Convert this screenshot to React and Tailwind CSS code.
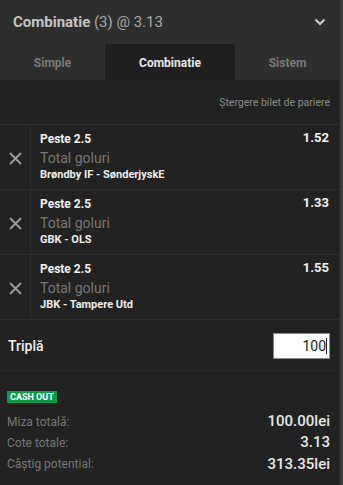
import React from "react";

function Row({ title, odd, market, match }) {
  return (
    <div className="flex h-[65px] border-b border-[#2e2e2e]">
      <div className="w-[31px] shrink-0 border-r border-[#2e2e2e] flex items-center justify-center">
        <svg width="13" height="13" viewBox="0 0 13 13" className="mt-[2px]">
          <path d="M1 1 L12 12 M12 1 L1 12" stroke="#9a9a9a" strokeWidth="2" />
        </svg>
      </div>
      <div className="flex-1 pl-[9px] pr-[11px] pt-[6px] flex flex-col">
        <div className="flex justify-between items-start">
          <span className="text-[12px] font-bold text-[#f0f0f0] leading-[16px]">{title}</span>
          <span className="text-[13px] font-bold text-[#f0f0f0] leading-[16px] -mt-[1px]">{odd}</span>
        </div>
        <div className="text-[14px] text-[#777] leading-[20px] mt-[1px]">{market}</div>
        <div className="text-[11px] font-bold text-[#eee] leading-[14px]">{match}</div>
      </div>
    </div>
  );
}

export default function App() {
  return (
    <div className="w-[343px] h-[485px] bg-[#222] flex" style={{ fontFamily: "Roboto, 'Noto Sans', sans-serif" }}>
      <div className="w-[340px] flex flex-col">
        <div className="h-[44px] bg-[#2e2e2e] flex items-center justify-between pl-[13px] pr-[14px]">
          <div className="text-[15px] text-[#c5c5c5]">
            <span className="font-bold">Combinatie</span>
            <span className="text-[#a8a8a8]"> (3) @ 3.13</span>
          </div>
          <svg width="12" height="8" viewBox="0 0 12 8">
            <path d="M1.5 1.5 L6 6 L10.5 1.5" stroke="#d0d0d0" strokeWidth="2" fill="none" />
          </svg>
        </div>
        <div className="h-[36px] bg-[#2e2e2e] flex text-[12px] font-bold">
          <div className="w-[105px] flex items-center justify-center text-[#7a7a7a] pt-[1px]">Simple</div>
          <div className="w-[130px] bg-[#1f1f1f] flex items-center justify-center text-[#e8e8e8] pt-[1px]">Combinatie</div>
          <div className="flex-1 flex items-center justify-center text-[#7a7a7a] pt-[1px]">Sistem</div>
        </div>
        <div className="h-[45px] border-b border-[#2e2e2e] flex items-center justify-end pr-[10px] pt-[2px]">
          <span className="text-[10.5px] text-[#8a8a8a]">Ștergere bilet de pariere</span>
        </div>
        <Row title="Peste 2.5" odd="1.52" market="Total goluri" match="Brøndby IF - SønderjyskE" />
        <Row title="Peste 2.5" odd="1.33" market="Total goluri" match="GBK - OLS" />
        <Row title="Peste 2.5" odd="1.55" market="Total goluri" match="JBK - Tampere Utd" />
        <div className="h-[51px] border-b border-[#2a2a2a] flex items-center justify-between pl-[8px] pr-[10px] pt-[2px]">
          <span className="text-[14px] font-medium text-[#eee]">Triplă</span>
          <div className="w-[57px] h-[26px] bg-white border border-[#888] flex items-center justify-end pr-[2px]">
            <span className="text-[14px] text-[#222]">100</span>
            <span className="w-[1px] h-[16px] bg-[#222]"></span>
          </div>
        </div>
        <div className="pl-[7px] pr-[10px] pt-[20px]">
          <div className="w-fit bg-[#0c9a48] text-white text-[9px] font-bold leading-[11px] px-[3px] py-[0.5px]">CASH OUT</div>
          <div className="mt-[8px] flex justify-between items-center h-[21px]">
            <span className="text-[12px] text-[#777]">Miza totală:</span>
            <span className="text-[15px] font-medium text-[#e8e8e8]">100.00lei</span>
          </div>
          <div className="flex justify-between items-center h-[21px]">
            <span className="text-[12px] text-[#777]">Cote totale:</span>
            <span className="text-[15px] font-medium text-[#e8e8e8]">3.13</span>
          </div>
          <div className="flex justify-between items-center h-[22px]">
            <span className="text-[12px] text-[#777]">Câștig potential:</span>
            <span className="text-[15px] font-medium text-[#e8e8e8]">313.35lei</span>
          </div>
        </div>
      </div>
      <div className="w-[3px] bg-[#3a3a3a]"></div>
    </div>
  );
}
